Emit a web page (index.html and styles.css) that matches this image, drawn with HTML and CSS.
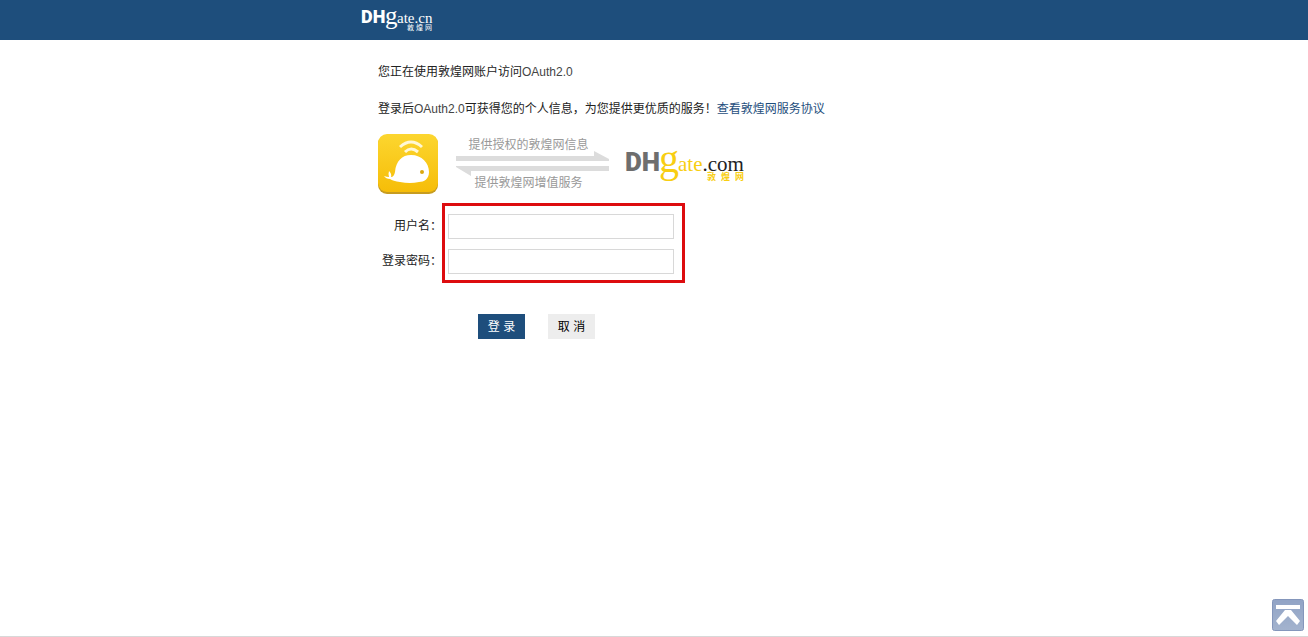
FILE: index.html
```html
<!DOCTYPE html>
<html lang="zh-CN">
<head>
  <meta charset="UTF-8">
  <meta name="viewport" content="width=device-width, initial-scale=1.0">
  <title>敦煌网登录授权</title>
  <link rel="stylesheet" href="styles.css">
</head>
<body>

  <header class="header">
    <div class="container">
      <svg class="header-logo" width="72" height="24" viewBox="0 0 72 24" role="img" aria-label="DHgate.cn">
        <text class="logo-dh" x="-1" y="15" font-size="18">DH</text>
        <text class="logo-g" x="23" y="16" font-size="25">g</text>
        <text class="logo-ate" x="35" y="15" font-size="15">ate.cn</text>
        <text class="logo-zh" x="45 54 63" y="22" font-size="7">敦煌网</text>
      </svg>
    </div>
  </header>

  <main class="container content">
    <p class="intro">您正在使用敦煌网账户访问<span class="app-name">OAuth2.0</span></p>
    <p class="intro">登录后<span class="app-name">OAuth2.0</span>可获得您的个人信息，为您提供更优质的服务！<a href="#">查看敦煌网服务协议</a></p>

    <div class="share">
      <svg class="app-icon" width="60" height="60" viewBox="0 0 60 60">
        <defs>
          <linearGradient id="icon-bg" x1="0" y1="0" x2="0" y2="1">
            <stop offset="0" stop-color="#fcd62f"/>
            <stop offset="1" stop-color="#f6bd08"/>
          </linearGradient>
        </defs>
        <rect y="1" width="60" height="59" rx="9" fill="#c79c20"/>
        <rect width="60" height="58" rx="9" fill="url(#icon-bg)"/>
        <path d="M22 13Q33 3 44 13M27 18Q33 12 40 18" fill="none" stroke="#fff8d5" stroke-width="3"/>
        <path d="M6 42Q9 43 11 43Q10 40 11 37Q14 40 13 43Q16 43 17 38C18 27 24 21 33 21C44 21 51 29 51 38C51 45 46 48 41 48Q32 50 22 48Q15 47 12 45Q8 45 6 42z" fill="#fff"/>
        <circle cx="44" cy="38" r="2" fill="#dba810"/>
      </svg>

      <div class="exchange">
        <span>提供授权的敦煌网信息</span>
        <svg width="153" height="24" viewBox="0 0 153 24">
          <path d="M0 4H138V-1L153 7V9H0zM153 19H15V24L0 15V14H153z" fill="#dcdcdc"/>
        </svg>
        <span>提供敦煌网增值服务</span>
      </div>

      <svg class="site-logo" width="120" height="36" viewBox="0 0 120 36" role="img" aria-label="DHgate.com">
        <text class="logo-dh" x="-1" y="25" font-size="26">DH</text>
        <text class="logo-g" x="33" y="26" font-size="40">g</text>
        <text class="logo-ate" x="52" y="25" font-size="21">ate<tspan class="logo-com">.com</tspan></text>
        <text class="logo-zh" x="81 95 109" y="34" font-size="9">敦煌网</text>
      </svg>
    </div>

    <form class="login-form" action="#" method="post">
      <div class="fields">
        <div class="labels">
          <label for="username">用户名：</label>
          <label for="password">登录密码：</label>
        </div>
        <div class="inputs">
          <input type="text" id="username" name="username">
          <input type="password" id="password" name="password">
        </div>
      </div>
      <div class="buttons">
        <button type="submit" class="btn btn-login">登 录</button>
        <button type="button" class="btn btn-cancel">取 消</button>
      </div>
    </form>
  </main>

  <footer class="footer"></footer>

  <a class="back-top" href="#" aria-label="返回顶部">
    <svg width="32" height="32" viewBox="0 0 32 32">
      <defs>
        <linearGradient id="top-bg" x1="0" y1="0" x2="0" y2="1">
          <stop offset="0" stop-color="#91a3c5"/>
          <stop offset="1" stop-color="#a3b3ce"/>
        </linearGradient>
      </defs>
      <rect x=".5" y=".5" width="31" height="31" rx="2" fill="url(#top-bg)" stroke="#8496bb"/>
      <path d="M4 6H28V10H4zM13 11H19L28 22L25 26L16 17L7 26L4 22z" fill="#fff"/>
    </svg>
  </a>

</body>
</html>
```

FILE: styles.css
```css
body {
  display: flex;
  flex-direction: column;
  min-height: 100vh;
  margin: 0;
  font-family: "Liberation Sans", Arial, "Noto Sans CJK SC", sans-serif;
  font-size: 12px;
  line-height: 18px;
  color: #222;
  background-color: #fff;
}
a {
  color: #1e4e7c;
  text-decoration: none;
}
a:hover {
  text-decoration: underline;
}
svg {
  display: block;
  overflow: visible;
}
.container {
  box-sizing: border-box;
  width: 100%;
  max-width: 584px;
  margin: 0 auto;
}

/* header */
.header {
  height: 40px;
  background-color: #1e4e7c;
}
.header-logo {
  padding-top: 8px;
  fill: #fff;
}

/* logos */
.logo-dh {
  font-family: Roboto, Arial, sans-serif;
  font-weight: 900;
}
.logo-g,
.logo-ate {
  font-family: "Liberation Serif", "Times New Roman", serif;
}
.logo-zh {
  font-family: "Noto Sans CJK SC", sans-serif;
}
.site-logo {
  fill: #f8ce12;
}
.site-logo .logo-dh {
  fill: #6e6e6e;
}
.site-logo .logo-zh {
  font-weight: bold;
}
.site-logo .logo-com {
  fill: #222;
}

/* content */
.content {
  flex: 1;
  padding: 23px 16px;
}
.intro {
  margin: 0 0 19px;
}
.app-name {
  color: #444;
}
.share {
  display: flex;
  align-items: center;
  margin-top: -3px;
}
.exchange {
  display: flex;
  flex-direction: column;
  align-items: center;
  margin: 0 17px 0 18px;
  line-height: 14px;
  color: #999;
}
.exchange span {
  padding-right: 8px;
}

/* login form */
.login-form {
  margin-top: 9px;
}
.fields {
  display: flex;
}
.labels {
  display: flex;
  flex-direction: column;
  gap: 10px;
  width: 64px;
  padding-top: 11px;
  line-height: 25px;
  text-align: right;
}
.inputs {
  display: flex;
  flex-direction: column;
  gap: 10px;
  padding: 8px 8px 6px 3px;
  border: 3px solid #dd0c0f;
}
.inputs input {
  box-sizing: border-box;
  width: 226px;
  height: 25px;
  padding: 0 4px;
  border: 1px solid #d8d8d8;
  font: inherit;
}
.buttons {
  display: flex;
  gap: 23px;
  margin: 31px 0 0 100px;
}
.btn {
  width: 47px;
  height: 25px;
  padding: 0;
  border: none;
  font: inherit;
  cursor: pointer;
}
.btn-login {
  background-color: #1e4e7c;
  color: #fff;
}
.btn-cancel {
  background-color: #ededed;
  color: #000;
}

.footer {
  border-top: 1px solid #d8d8d8;
}
.back-top {
  position: fixed;
  right: 4px;
  bottom: 6px;
}
```
